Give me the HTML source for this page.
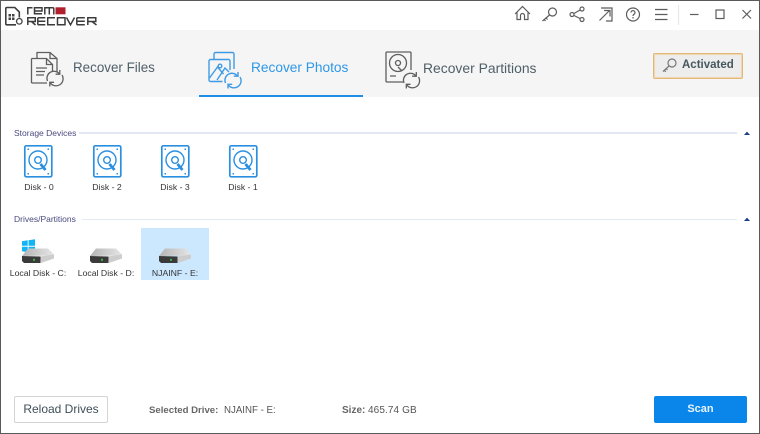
<!DOCTYPE html>
<html><head><meta charset="utf-8"><style>
html,body{margin:0;padding:0;width:760px;height:434px;overflow:hidden;background:#fff;font-family:"Liberation Sans",sans-serif}
.a{position:absolute;white-space:nowrap}
svg{position:absolute;overflow:visible}
.c{text-align:center;width:68px;font-size:8.700px;color:#333}
.f{top:405px;line-height:12px}
</style></head><body>
<div class="a" style="left:0;top:30px;width:760px;height:67px;background:#f5f5f5"></div>
<div class="a" style="left:199px;top:95px;width:164px;height:2px;background:#1f8fe5"></div>

<!-- logo -->
<svg style="left:0;top:0" width="110" height="30" fill="none">
<path d="M5.800 8.500a1 1 0 0 1 1-1h8l4.500 4.500v5.500M16 24.800h-9.200a1 1 0 0 1-1-1V8.500" stroke="#3f3f3f" stroke-width="1.600"/>
<rect x="8.500" y="14" width="2.500" height="2.500" fill="#444"/><rect x="12" y="14" width="2.500" height="2.500" fill="#444"/><rect x="8.500" y="17.500" width="2.500" height="2.500" fill="#444"/><rect x="12" y="17.500" width="2.500" height="2.500" fill="#444"/>
<circle cx="19.300" cy="21.300" r="2.800" stroke="#444" stroke-width="1.300"/>
<path d="M27.800 14.500V7.800h4.700M34.500 11h7.500V7.800h-7.500v6h7.500M44.800 14.500V7.800h8a1 1 0 0 1 1 1v5.700M49.300 7.800v6.700" stroke="#3c3c3c" stroke-width="1.500"/>
<rect x="55.500" y="7.300" width="10" height="7" fill="#b0202c"/>
<path d="M27.800 25v-7.300h7.500v3.800h-7.500M31.500 21.500l4 3.500M37.800 17.700h7.500M37.800 21.300h7.500M37.800 24.800h7.500M37.800 17.700v7.100M55 17.700h-7.300v7.100H55M57.500 17.700h7.500v7.100h-7.500zM66.500 17.500l4 7.300 4-7.300M76.800 17.700h8M76.800 21.300h8M76.800 24.800h8M76.800 17.700v7.100M87.800 25v-7.300h8v3.800h-8M92 21.500l4.500 3.500" stroke="#3c3c3c" stroke-width="1.500"/>
</svg>

<!-- top icons -->
<svg style="left:0;top:0" width="760" height="30" fill="none" stroke="#5c5c5c" stroke-width="1.200">
<path d="M515 14l7.500-7.500 7.500 7.500M517 12.500v7h3.500v-4a2 2 0 0 1 4 0v4h3.500v-7"/>
<circle cx="552.500" cy="12" r="4"/><path d="M549.500 15l-7 6M544 19.500l1.500 1.500M546 18l1.500 1.500"/>
<circle cx="572" cy="14.500" r="2"/><circle cx="582" cy="9" r="2"/><circle cx="582" cy="19.500" r="2"/><path d="M574 13.500l6-3.500M574 15.500l6 3"/>
<path d="M601 8h11v13h-6M599.500 20.500l10-10M604 10.500h6v6"/>
<circle cx="633" cy="14.500" r="6.500"/>
<path d="M631 12.500a2 2 0 1 1 3 1.800c-.7.4-1 .9-1 1.700M633 17v1.500"/>
<path d="M655 9.500h12.500M655 14.500h12.500M655 19.500h12.500"/>
<path d="M690 14.500h8.500" />
<rect x="716" y="10" width="8" height="8.500"/>
<path d="M742.500 10l8.500 8.500M751 10l-8.500 8.500"/>
<path d="M678.500 5v20" stroke="#e8e8e8"/>
</svg>

<!-- tab icons -->
<svg style="left:0;top:0" width="420" height="97" fill="none" stroke="#5f5f5f" stroke-width="1.300">
<path d="M37 58v-5.500h13l7 6v14"/><path d="M50 52.500v6h7"/>
<path d="M31.500 58.500h15l6 6v7M47 83h-15.500M31.500 58.500V83M46.500 58.500v6h6M36 68h11M36 71.500h9M36 75h8"/>
<path d="M47.500 81a7 7 0 0 1 12-7M62 75a7 7 0 0 1-12 7.500M59.800 70v4.200h-4.200M49.800 86.500v-4.200h4.200"/>
<g stroke="#3f9be6" stroke-width="1.400">
<path d="M214 59v-5a1.500 1.500 0 0 1 1.500-1.500h17a1.500 1.500 0 0 1 1.500 1.500v15M230 70V61a1.500 1.500 0 0 0-1.500-1.500h-18a1.500 1.500 0 0 0-1.500 1.500v19a1.500 1.500 0 0 0 1.500 1.500h12"/>
<path d="M209.500 78l8-11 6 7M217 80l8-12 4 4"/>
<circle cx="220" cy="66" r="1.800"/>
<path d="M225.500 83a7 7 0 0 1 12-7M240 77a7 7 0 0 1-12 7.500M238 72v4.200h-4.200M228 88.500v-4.200h4.200"/>
</g>
<path d="M403 82h-16a1 1 0 0 1-1-1V53a1 1 0 0 1 1-1h23a1 1 0 0 1 1 1v17"/>
<circle cx="398" cy="63" r="8.500"/><circle cx="398" cy="63" r="2.500"/>
<path d="M390 76h6M398 67l4 4"/>
<path d="M404 83a7 7 0 0 1 12-7M418.500 77a7 7 0 0 1-12 7.500M416.300 72v4.200h-4.200M406.300 88.500v-4.200h4.200"/>
</svg>

<div class="a" style="left:73px;top:60px;font-size:13.400px;color:#4f5f68">Recover Files</div>
<div class="a" style="left:251px;top:60px;font-size:13.700px;color:#2e97e8">Recover Photos</div>
<div class="a" style="left:423px;top:60px;font-size:13.900px;color:#4f5f68">Recover Partitions</div>

<!-- Activated -->
<div class="a" style="left:653px;top:53px;width:88px;height:24px;border:1px solid #e3b878;border-radius:2px;background:#ededed;box-shadow:inset 0 0 0 1px #f0d6ab"></div>
<svg style="left:660px;top:58px" width="20" height="16" fill="none" stroke="#777" stroke-width="1.200"><circle cx="12" cy="5" r="4"/><path d="M9 8l-6 5.500M4.500 12.500l1.300 1.300M6.300 10.800l1.200 1.200"/></svg>
<div class="a" style="left:682px;top:59px;font-size:11.500px;font-weight:bold;color:#46575f">Activated</div>

<!-- Storage section -->
<div class="a" style="left:14px;top:128px;font-size:8.500px;color:#4a4a80">Storage Devices</div>
<div class="a" style="left:79px;top:132px;width:658px;height:2px;background:#e3e8f4"></div>
<svg style="left:744px;top:131px" width="6" height="5"><path d="M0 4L3 .6 6 4z" fill="#1c3f8c"/></svg>

<svg width="0" height="0" style="position:absolute"><defs>
<g id="disk" fill="none" stroke="#2b8fe0">
<rect x=".8" y=".8" width="27" height="31" rx="1.500" stroke-width="1.700"/>
<circle cx="14" cy="15" r="9" stroke-width="1.400"/>
<circle cx="14" cy="15" r="3.300" stroke-width="1.400"/>
<path d="M16.500 19l5 6" stroke-width="2.800"/>
<g fill="#2b8fe0" stroke="none"><rect x="3.500" y="3.500" width="1.500" height="1.500"/><rect x="23.500" y="3.500" width="1.500" height="1.500"/><rect x="3.500" y="28" width="1.500" height="1.500"/><rect x="23.500" y="28" width="1.500" height="1.500"/></g>
</g>
<linearGradient id="top" x1="0" x2="1"><stop offset="0" stop-color="#b4b4b4"/><stop offset="1" stop-color="#e6e6e6"/></linearGradient>
<g id="drive">
<path d="M0 8L6 0.500h20L32 6.500v1L0 8z" fill="url(#top)"/>
<path d="M18 8.500l14-2v4L19 15z" fill="#cdcdcd"/>
<path d="M0 8l18.500.5V15H2L0 13z" fill="#3a3a3a"/>
<rect x="11" y="10.800" width="2" height="2" fill="#3fb24a"/>
</g>
</defs></svg>

<svg style="left:24px;top:145px" width="30" height="34"><use href="#disk"/></svg>
<svg style="left:92.500px;top:145px" width="30" height="34"><use href="#disk"/></svg>
<svg style="left:160.500px;top:145px" width="30" height="34"><use href="#disk"/></svg>
<svg style="left:228.500px;top:145px" width="30" height="34"><use href="#disk"/></svg>
<div class="a c" style="left:5px;top:182px">Disk - 0</div>
<div class="a c" style="left:73px;top:182px">Disk - 2</div>
<div class="a c" style="left:141px;top:182px">Disk - 3</div>
<div class="a c" style="left:209px;top:182px">Disk - 1</div>

<!-- Drives section -->
<div class="a" style="left:14px;top:214px;font-size:8.500px;color:#4a4a80">Drives/Partitions</div>
<div class="a" style="left:82px;top:219px;width:655px;height:1px;background:#e4e8f2"></div>
<svg style="left:744px;top:217px" width="6" height="5"><path d="M0 4L3 .6 6 4z" fill="#1c3f8c"/></svg>

<div class="a" style="left:141px;top:228px;width:68px;height:52px;background:#cce8ff"></div>
<svg style="left:22px;top:239px" width="16" height="16"><g fill="#11b4f5"><path d="M0 2.200L5.700 1.300v5.500H0zM6.600 1.200L13 .2v6.600H6.600zM0 7.700h5.700v5.500L0 12.300zM6.600 7.700H13v6.500l-6.400-1z"/></g></svg>
<svg style="left:22px;top:248px" width="33" height="16"><use href="#drive"/></svg>
<svg style="left:90px;top:248px" width="33" height="16"><use href="#drive"/></svg>
<svg style="left:158.500px;top:248px" width="33" height="16"><use href="#drive"/></svg>
<div class="a c" style="left:4px;top:268px">Local Disk - C:</div>
<div class="a c" style="left:72px;top:268px">Local Disk - D:</div>
<div class="a c" style="left:141px;top:268px">NJAINF - E:</div>

<!-- Footer -->
<div class="a" style="left:14px;top:396px;width:92px;height:25px;border:1px solid #d4d4d4;border-radius:2px;background:#fff;text-align:center;line-height:24px;font-size:12px;color:#3e4f57">Reload Drives</div>
<div class="a f" style="left:149px;font-size:9.600px;font-weight:bold;color:#666">Selected Drive:</div>
<div class="a f" style="left:224px;font-size:9.700px;color:#555">NJAINF - E:</div>
<div class="a f" style="left:342px;font-size:10px;font-weight:bold;color:#666">Size:</div>
<div class="a f" style="left:368px;font-size:10px;color:#555;letter-spacing:.1px">465.74 GB</div>
<div class="a" style="left:654px;top:396px;width:93px;height:27px;background:#0a86ea;border-radius:2px;text-align:center;line-height:27px;font-size:11px;font-weight:bold;color:#e6f3ff">Scan</div>

<!-- Window border -->
<div class="a" style="left:0;top:0;width:758px;height:432px;border:1px solid #5a5a5a"></div>
</body></html>
